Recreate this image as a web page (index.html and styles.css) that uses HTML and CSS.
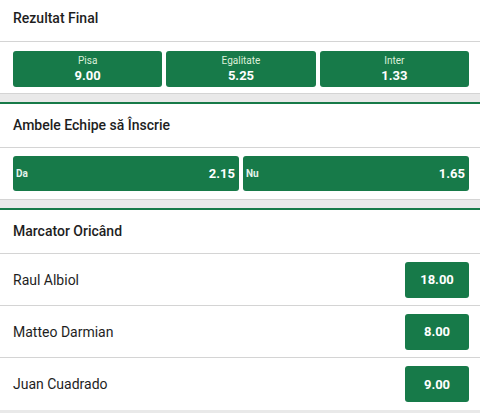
FILE: index.html
```html
<!DOCTYPE html>
<html>
<head>
<meta charset="utf-8">
<link rel="stylesheet" href="styles.css">
</head>
<body>
<section class="market first">
  <div class="market-head">Rezultat Final</div>
  <div class="odds three">
    <button class="odd stacked"><span class="lbl">Pisa</span><span class="val">9.00</span></button>
    <button class="odd stacked"><span class="lbl">Egalitate</span><span class="val">5.25</span></button>
    <button class="odd stacked"><span class="lbl">Inter</span><span class="val">1.33</span></button>
  </div>
</section>
<div class="band"></div>
<section class="market">
  <div class="market-head">Ambele Echipe să Înscrie</div>
  <div class="odds two">
    <button class="odd inline"><span class="lbl">Da</span><span class="val">2.15</span></button>
    <button class="odd inline"><span class="lbl">Nu</span><span class="val">1.65</span></button>
  </div>
</section>
<div class="band"></div>
<section class="market">
  <div class="market-head">Marcator Oricând</div>
  <div class="row"><span class="name">Raul Albiol</span><button class="odd small"><span class="val">18.00</span></button></div>
  <div class="row"><span class="name">Matteo Darmian</span><button class="odd small"><span class="val">8.00</span></button></div>
  <div class="row"><span class="name">Juan Cuadrado</span><button class="odd small"><span class="val">9.00</span></button></div>
</section>
<div class="band"></div>
</body>
</html>
```
FILE: styles.css
```css
* { box-sizing: border-box; }
html, body { margin: 0; padding: 0; background: #fff; }
body {
  font-family: Roboto, "Liberation Sans", Arial, sans-serif;
  color: #1e1e1e;
  width: 480px;
  overflow: hidden;
}
.market {
  border-top: 2px solid #177a49;
  background: #fff;
}
.market.first { border-top: none; }
.market-head {
  font-size: 14px;
  font-weight: 500;
  line-height: 20px;
  height: 44px;
  padding: 11px 11px 0 13px;
  border-bottom: 1px solid #d4d4d4;
}
.market.first .market-head { height: 42px; padding-top: 8px; }
.odds {
  display: flex;
  gap: 4px;
  padding: 9px 11px 6px 13px;
  border-bottom: 1px solid #d4d4d4;
}
.odds.two { padding-top: 8px; padding-bottom: 8px; }
.odd {
  border: none;
  margin: 0;
  background: #177a49;
  color: #fff;
  border-radius: 3px;
  font-family: inherit;
  padding: 0;
  cursor: pointer;
}
.odd.stacked {
  flex: 1;
  height: 36px;
  display: flex;
  flex-direction: column;
  align-items: center;
  justify-content: center;
}
.odd.stacked .lbl {
  font-size: 10px;
  line-height: 12px;
  color: #dcefd9;
}
.odd.stacked .val {
  font-size: 13px;
  font-weight: 700;
  line-height: 17px;
}
.odd.inline {
  flex: 1;
  height: 35px;
  display: flex;
  align-items: center;
  justify-content: space-between;
  padding: 0 4px 0 3px;
}
.odd.inline .lbl {
  font-size: 10px;
  font-weight: 700;
  color: #e4f3ec;
}
.odd.inline .val {
  font-size: 13px;
  font-weight: 700;
}
.row {
  display: flex;
  align-items: center;
  justify-content: space-between;
  height: 52px;
  padding: 0 11px 0 13px;
  border-bottom: 1px solid #d4d4d4;
}
.row:last-child { border-bottom: none; }
.name {
  font-size: 14px;
  font-weight: 400;
}
.odd.small {
  width: 64px;
  height: 36px;
  display: flex;
  align-items: center;
  justify-content: center;
}
.odd.small .val {
  font-size: 13px;
  font-weight: 700;
}
.band {
  height: 8px;
  background: #e9e9e9;
}
```
